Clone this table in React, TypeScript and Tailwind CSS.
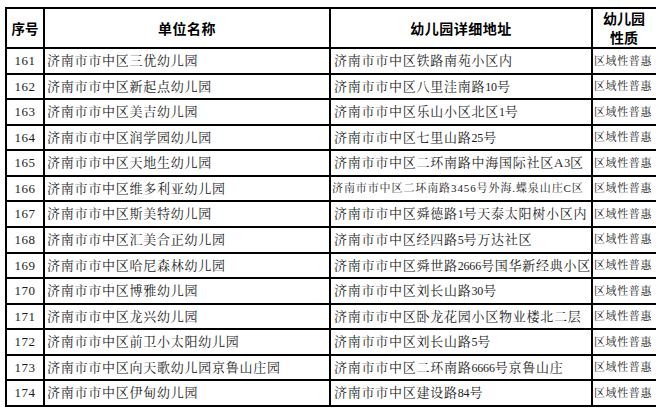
import React from 'react';

type Row = {
  no: number;
  name: string;
  addr: string;
  small?: boolean;
};

const rows: Row[] = [
  { no: 161, name: '济南市市中区三优幼儿园', addr: '济南市市中区铁路南苑小区内' },
  { no: 162, name: '济南市市中区新起点幼儿园', addr: '济南市市中区八里洼南路10号' },
  { no: 163, name: '济南市市中区美吉幼儿园', addr: '济南市市中区乐山小区北区1号' },
  { no: 164, name: '济南市市中区润学园幼儿园', addr: '济南市市中区七里山路25号' },
  { no: 165, name: '济南市市中区天地生幼儿园', addr: '济南市市中区二环南路中海国际社区A3区' },
  { no: 166, name: '济南市市中区维多利亚幼儿园', addr: '济南市市中区二环南路3456号外海.蝶泉山庄C区', small: true },
  { no: 167, name: '济南市市中区斯美特幼儿园', addr: '济南市市中区舜德路1号天泰太阳树小区内' },
  { no: 168, name: '济南市市中区汇美合正幼儿园', addr: '济南市市中区经四路5号万达社区' },
  { no: 169, name: '济南市市中区哈尼森林幼儿园', addr: '济南市市中区舜世路2666号国华新经典小区' },
  { no: 170, name: '济南市市中区博雅幼儿园', addr: '济南市市中区刘长山路30号' },
  { no: 171, name: '济南市市中区龙兴幼儿园', addr: '济南市市中区卧龙花园小区物业楼北二层' },
  { no: 172, name: '济南市市中区前卫小太阳幼儿园', addr: '济南市市中区刘长山路5号' },
  { no: 173, name: '济南市市中区向天歌幼儿园京鲁山庄园', addr: '济南市市中区二环南路6666号京鲁山庄' },
  { no: 174, name: '济南市市中区伊甸幼儿园', addr: '济南市市中区建设路84号' },
];

const serif = "font-['Liberation_Serif','Noto_Serif_CJK_SC','Noto_Sans_CJK_SC',serif]";

// digits in the source are narrower than the CJK glyph pitch
function Addr({ text, small }: { text: string; small?: boolean }) {
  if (small) return <>{text}</>;
  return (
    <>
      {text.split(/(\d+)/).map((part, i) =>
        /^\d+$/.test(part) ? (
          <span key={i} className="text-[12px] tracking-[-0.2px]">
            {part}
          </span>
        ) : (
          <span key={i}>{part}</span>
        )
      )}
    </>
  );
}

export default function App() {
  return (
    <div className="w-[656px] h-[409px] overflow-hidden bg-white">
      <div className="pt-[7px] pl-[5px]">
        <table className="table-fixed border-collapse border-2 border-black w-[660px] text-[#1c1c1c]">
          <colgroup>
            <col className="w-[38px]" />
            <col className="w-[286px]" />
            <col className="w-[262px]" />
            <col className="w-[74px]" />
          </colgroup>
          <thead>
            <tr className="h-[38px] font-['Noto_Sans_CJK_SC',sans-serif] font-bold text-black">
              <th className="border-2 border-black text-[13.5px] p-0">序号</th>
              <th className="border-2 border-black text-[14px] tracking-[0.5px] p-0">单位名称</th>
              <th className="border-2 border-black text-[14px] tracking-[0.5px] p-0">幼儿园详细地址</th>
              <th className="border-2 border-black text-[14px] leading-[19px] p-0 pr-[10px]">
                幼儿园
                <br />
                性质
              </th>
            </tr>
          </thead>
          <tbody className={serif}>
            {rows.map((r) => (
              <tr key={r.no} className="h-[25.57px]">
                <td className="border-2 border-black text-center text-[13px] tracking-[0.5px] p-0">{r.no}</td>
                <td className="border-2 border-black text-[13px] tracking-[0.75px] pl-[2px] p-0 whitespace-nowrap">
                  {r.name}
                </td>
                <td
                  className={
                    r.small
                      ? 'border-2 border-black text-[11px] tracking-[0.9px] pl-[1px] p-0 whitespace-nowrap'
                      : 'border-2 border-black text-[13px] tracking-[0.75px] pl-[3px] p-0 whitespace-nowrap'
                  }
                >
                  <Addr text={r.addr} small={r.small} />
                </td>
                <td className="border-2 border-black text-[11px] tracking-[0.6px] pl-[1px] p-0 whitespace-nowrap">
                  区域性普惠
                </td>
              </tr>
            ))}
          </tbody>
        </table>
      </div>
    </div>
  );
}
